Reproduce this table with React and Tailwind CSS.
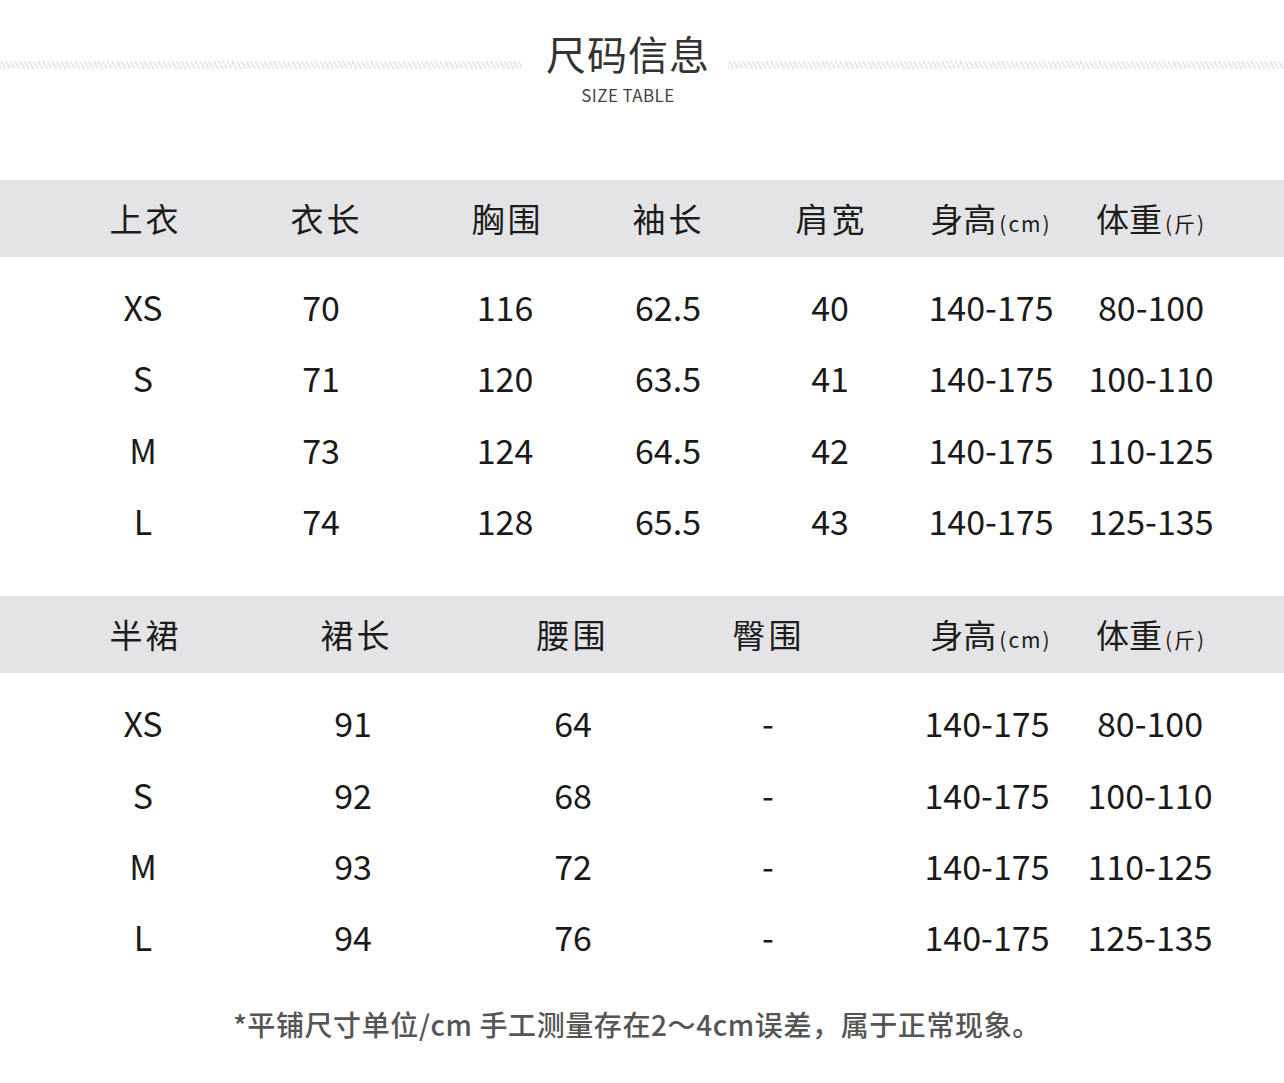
import React from 'react';

const font = { fontFamily: '"Noto Sans CJK SC", "Noto Sans", sans-serif' };

const topHead = ['上衣', '衣长', '胸围', '袖长', '肩宽', ['身高', '(cm)'], ['体重', '(斤)']];
const topRows = [
  ['XS', '70', '116', '62.5', '40', '140-175', '80-100'],
  ['S', '71', '120', '63.5', '41', '140-175', '100-110'],
  ['M', '73', '124', '64.5', '42', '140-175', '110-125'],
  ['L', '74', '128', '65.5', '43', '140-175', '125-135'],
];

const skirtHead = ['半裙', '裙长', '腰围', '臀围', ['身高', '(cm)'], ['体重', '(斤)']];
const skirtRows = [
  ['XS', '91', '64', '-', '140-175', '80-100'],
  ['S', '92', '68', '-', '140-175', '100-110'],
  ['M', '93', '72', '-', '140-175', '110-125'],
  ['L', '94', '76', '-', '140-175', '125-135'],
];

const Cell = ({ children }) => (
  <div className="flex justify-center items-center whitespace-nowrap">{children}</div>
);

const HeadLabel = ({ label }) => {
  if (Array.isArray(label)) {
    return (
      <span className="flex items-baseline">
        <span>{label[0]}</span>
        <span className="text-[21px] tracking-[2px] ml-[3px]">{label[1]}</span>
      </span>
    );
  }
  return <span className="tracking-[3px] ml-[3px]">{label}</span>;
};

const SizeTable = ({ head, rows, headCols, rowCols }) => (
  <div>
    {/* Header band */}
    <div className="bg-[#e4e4e6] h-[77px] flex items-center">
      <div className={`grid pl-[54px] w-full text-[33px] text-[#1c1c1c] ${headCols}`}>
        {head.map((h, i) => (
          <Cell key={i}><HeadLabel label={h} /></Cell>
        ))}
      </div>
    </div>
    {/* Rows */}
    <div className="pt-[14px]">
      {rows.map((row, r) => (
        <div key={r} className={`grid pl-[54px] h-[71.3px] items-center text-[34px] text-[#1a1a1a] ${rowCols}`}>
          {row.map((v, i) => (
            <Cell key={i}>{v}</Cell>
          ))}
        </div>
      ))}
    </div>
  </div>
);

const Hatch = ({ className }) => (
  <div
    className={`h-[8px] mt-[30px] bg-[repeating-linear-gradient(60deg,#e8e8e8_0px,#e8e8e8_2px,#ffffff_2px,#ffffff_4px)] ${className}`}
  />
);

export default function App() {
  return (
    <div className="w-[1284px] h-[1083px] bg-white overflow-hidden" style={font}>
      {/* Title */}
      <div className="flex items-start pt-[31px]">
        <Hatch className="w-[522px]" />
        <div className="w-[206px] flex flex-col items-center pl-[6px]">
          <div className="text-[40px] leading-[44px] text-[#333] tracking-[1px]">尺码信息</div>
          <div className="text-[17px] leading-[20px] mt-[10px] text-[#444] tracking-[0.4px]">SIZE TABLE</div>
        </div>
        <Hatch className="flex-1" />
      </div>

      <div className="mt-[75px]">
        <SizeTable
          head={topHead}
          rows={topRows}
          headCols="grid-cols-[180px_182px_180px_142px_184px_138px_182px]"
          rowCols="grid-cols-[178px_178px_190px_136px_188px_134px_186px]"
        />
      </div>

      <div className="mt-[40px]">
        <SizeTable
          head={skirtHead}
          rows={skirtRows}
          headCols="grid-cols-[180px_242px_190px_202px_246px_74px]"
          rowCols="grid-cols-[178px_242px_198px_192px_246px_80px]"
        />
      </div>

      {/* Footnote */}
      <div className="mt-[32px] flex justify-center pr-[10px]">
        <p className="text-[28px] leading-[40px] font-medium text-[#555] tracking-[0.6px] whitespace-nowrap">
          *平铺尺寸单位/cm 手工测量存在2～4cm误差，属于正常现象。
        </p>
      </div>
    </div>
  );
}
